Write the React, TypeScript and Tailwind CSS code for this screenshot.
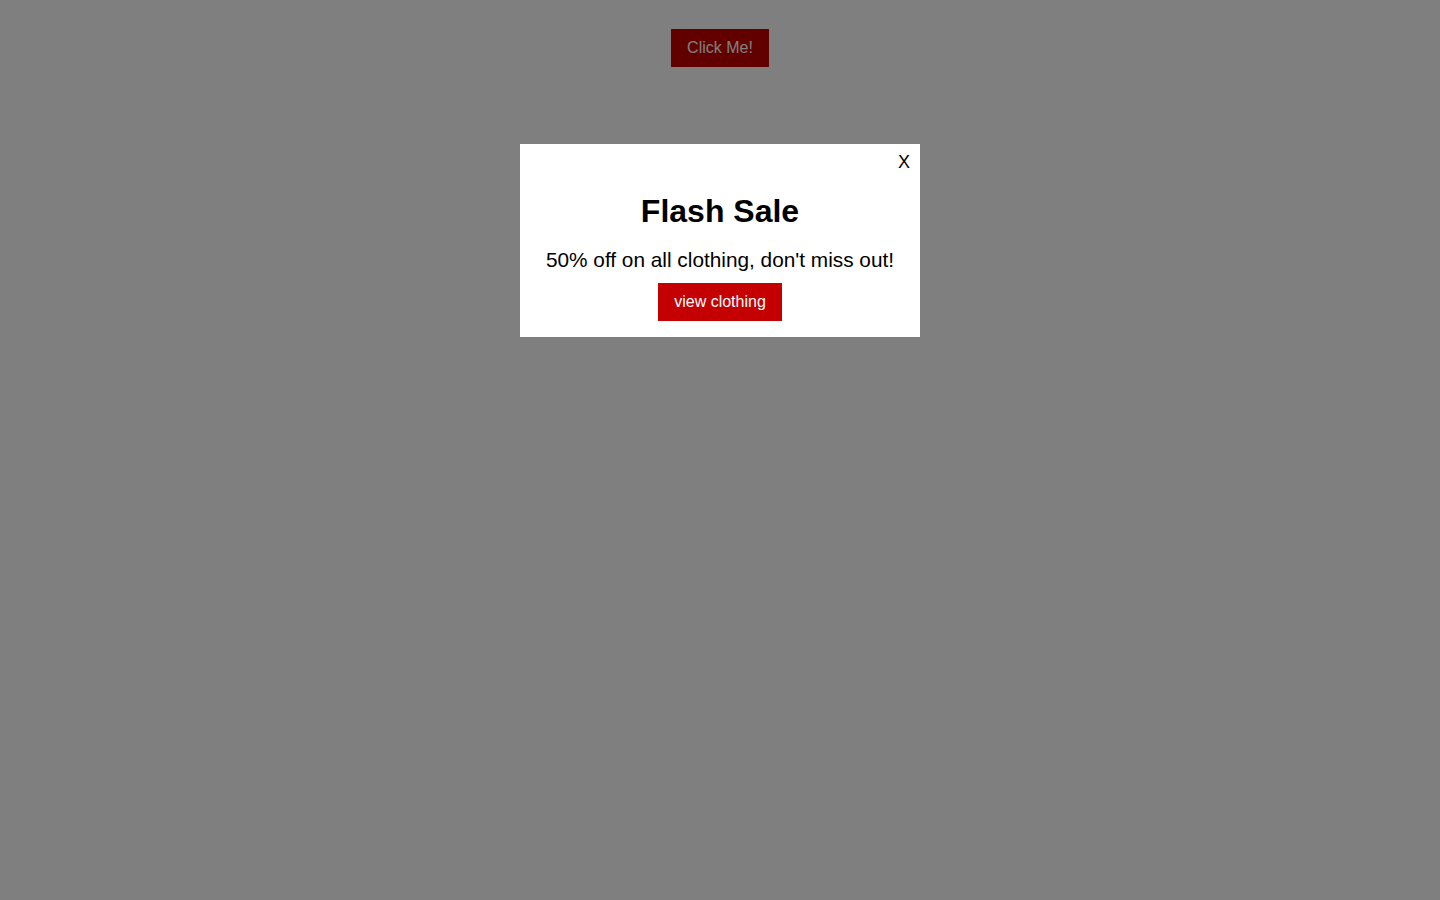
import React from 'react';

const App: React.FC = () => {
  return (
    <div className="relative min-h-screen bg-white font-['Liberation_Sans',Arial,sans-serif]">
      {/* page content behind overlay */}
      <div className="flex justify-center pt-[29px]">
        <button className="bg-[#c40000] px-4 py-[10px] text-base leading-[18px] text-white">
          Click Me!
        </button>
      </div>

      {/* overlay */}
      <div className="fixed inset-0 bg-black/50">
        <div className="flex justify-center pt-[144px]">
          <div className="relative w-[400px] bg-white pt-[49px] pb-4 text-center text-black">
            <span className="absolute top-[8px] right-[10px] cursor-pointer text-[18px] leading-[21px]">X</span>
            <h2 className="text-[32px] font-bold leading-[37px]">Flash Sale</h2>
            <p className="mt-[18px] text-[20.8px] leading-[24px]">50% off on all clothing, don't miss out!</p>
            <button className="mt-[11px] bg-[#c40000] px-4 py-[10px] text-base leading-[18px] text-white">
              view clothing
            </button>
          </div>
        </div>
      </div>
    </div>
  );
};

export default App;
